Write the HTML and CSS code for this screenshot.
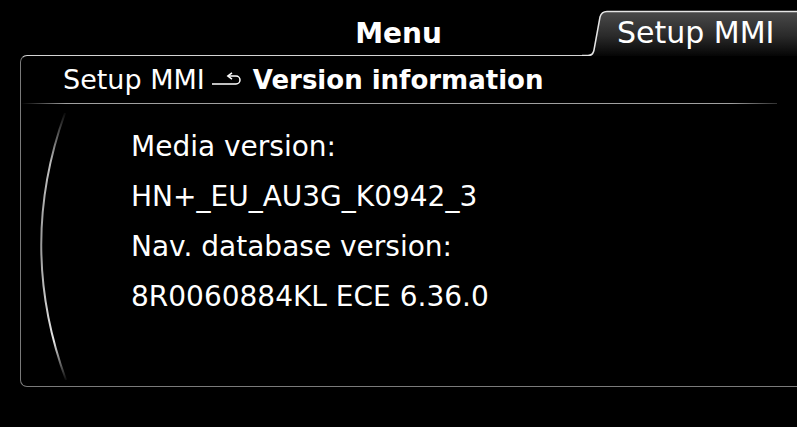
FILE: index.html
```html
<!DOCTYPE html>
<html lang="en">

<head>
    <meta charset="UTF-8">
    <meta name="viewport" content="width=device-width, initial-scale=1.0">
    <title>Version information</title>
    <link rel="stylesheet" href="styles.css">
</head>

<body>
    <div class="screen">
        <header class="top">
            <div></div>
            <h1 class="menu-title">Menu</h1>
            <div class="tab">
                <svg class="tab-shape" width="215" height="46" viewBox="0 0 215 46">
                    <defs>
                        <linearGradient id="tabFill" x1="0" y1="0" x2="0" y2="1">
                            <stop offset="0" stop-color="#4a4a4a" />
                            <stop offset="0.55" stop-color="#2a2a2a" />
                            <stop offset="1" stop-color="#050505" />
                        </linearGradient>
                    </defs>
                    <path d="M0,46 H6 Q11,45.5 12,40 L18,7 Q19.5,1.5 25,1.5 H215 V46 Z" fill="url(#tabFill)" />
                    <path d="M0,45.5 H6 Q11,45.5 12,40 L18,7 Q19.5,1.5 25,1.5 H215" fill="none" stroke="#e6e6e6" stroke-width="1.5" />
                </svg>
                <span class="tab-label">Setup MMI</span>
            </div>
        </header>

        <section class="panel">
            <div class="crumb">
                <span class="crumb-parent">Setup MMI</span>
                <svg class="back-icon" width="32" height="14" viewBox="0 0 32 14">
                    <path d="M1,12 H25 A4,4 0 0 0 25,4 H17" fill="none" stroke="#fff" stroke-width="1.5" />
                    <path d="M21,0.8 L16.8,4 L21,7.2" fill="none" stroke="#fff" stroke-width="1.5" />
                </svg>
                <span class="crumb-current">Version information</span>
            </div>
            <div class="rule"></div>

            <div class="panel-body">
                <svg class="arc" width="30" height="272" viewBox="0 0 30 272">
                    <defs>
                        <linearGradient id="arcFade" gradientUnits="userSpaceOnUse" x1="0" y1="0" x2="0" y2="272">
                            <stop offset="0" stop-color="#fff" stop-opacity="0" />
                            <stop offset="0.2" stop-color="#fff" stop-opacity="0.75" />
                            <stop offset="0.5" stop-color="#fff" stop-opacity="0.6" />
                            <stop offset="0.85" stop-color="#fff" stop-opacity="0.9" />
                            <stop offset="1" stop-color="#fff" stop-opacity="0" />
                        </linearGradient>
                    </defs>
                    <path d="M27,3 Q-21,136 28,270" fill="none" stroke="url(#arcFade)" stroke-width="2" />
                </svg>
                <ul class="info">
                    <li>Media version:</li>
                    <li>HN+_EU_AU3G_K0942_3</li>
                    <li>Nav. database version:</li>
                    <li>8R0060884KL ECE 6.36.0</li>
                </ul>
            </div>
        </section>
    </div>
</body>

</html>
```

FILE: styles.css
```css
html,
body {
    margin: 0;
    background: #000;
}

.screen {
    width: 797px;
    height: 427px;
    overflow: hidden;
    color: #fff;
    font-family: "DejaVu Sans", sans-serif;
}

.top {
    display: grid;
    grid-template-columns: 1fr auto 1fr;
    height: 56px;
}

.menu-title {
    margin: 0;
    padding-top: 18px;
    font-size: 28px;
    font-weight: bold;
    line-height: 32px;
}

.tab {
    position: relative;
    z-index: 1;
    justify-self: end;
    width: 215px;
    height: 46px;
    margin-top: 10px;
}

.tab-shape {
    position: absolute;
    left: 0;
    top: 0;
}

.tab-label {
    position: relative;
    display: block;
    padding-left: 35px;
    font-size: 30px;
    line-height: 46px;
    white-space: nowrap;
}

.panel {
    box-sizing: border-box;
    height: 332px;
    margin: -1px -20px 0 20px;
    border: 1px solid #7a7a7a;
    border-top-color: #d4d4d4;
    border-right: none;
    border-radius: 7px 0 0 7px;
}

.crumb {
    display: flex;
    align-items: baseline;
    padding: 1px 0 0 42px;
    font-size: 26px;
    line-height: 46px;
    white-space: nowrap;
}

.crumb-parent {
    font-size: 27px;
}

.back-icon {
    margin: 0 10px 0 6px;
    align-self: center;
    position: relative;
    top: -1px;
}

.crumb-current {
    font-weight: bold;
}

.rule {
    height: 1px;
    margin-right: 40px;
    background: linear-gradient(to right, rgba(160, 160, 160, 0) 0, #a0a0a0 45px, #a0a0a0 710px, rgba(160, 160, 160, 0) 776px);
}

.panel-body {
    display: flex;
    align-items: flex-start;
}

.arc {
    margin: 6px 0 0 17px;
}

.info {
    margin: 18px 0 0 63px;
    padding: 0;
    list-style: none;
    font-size: 28px;
    line-height: 50px;
    white-space: nowrap;
}
```
